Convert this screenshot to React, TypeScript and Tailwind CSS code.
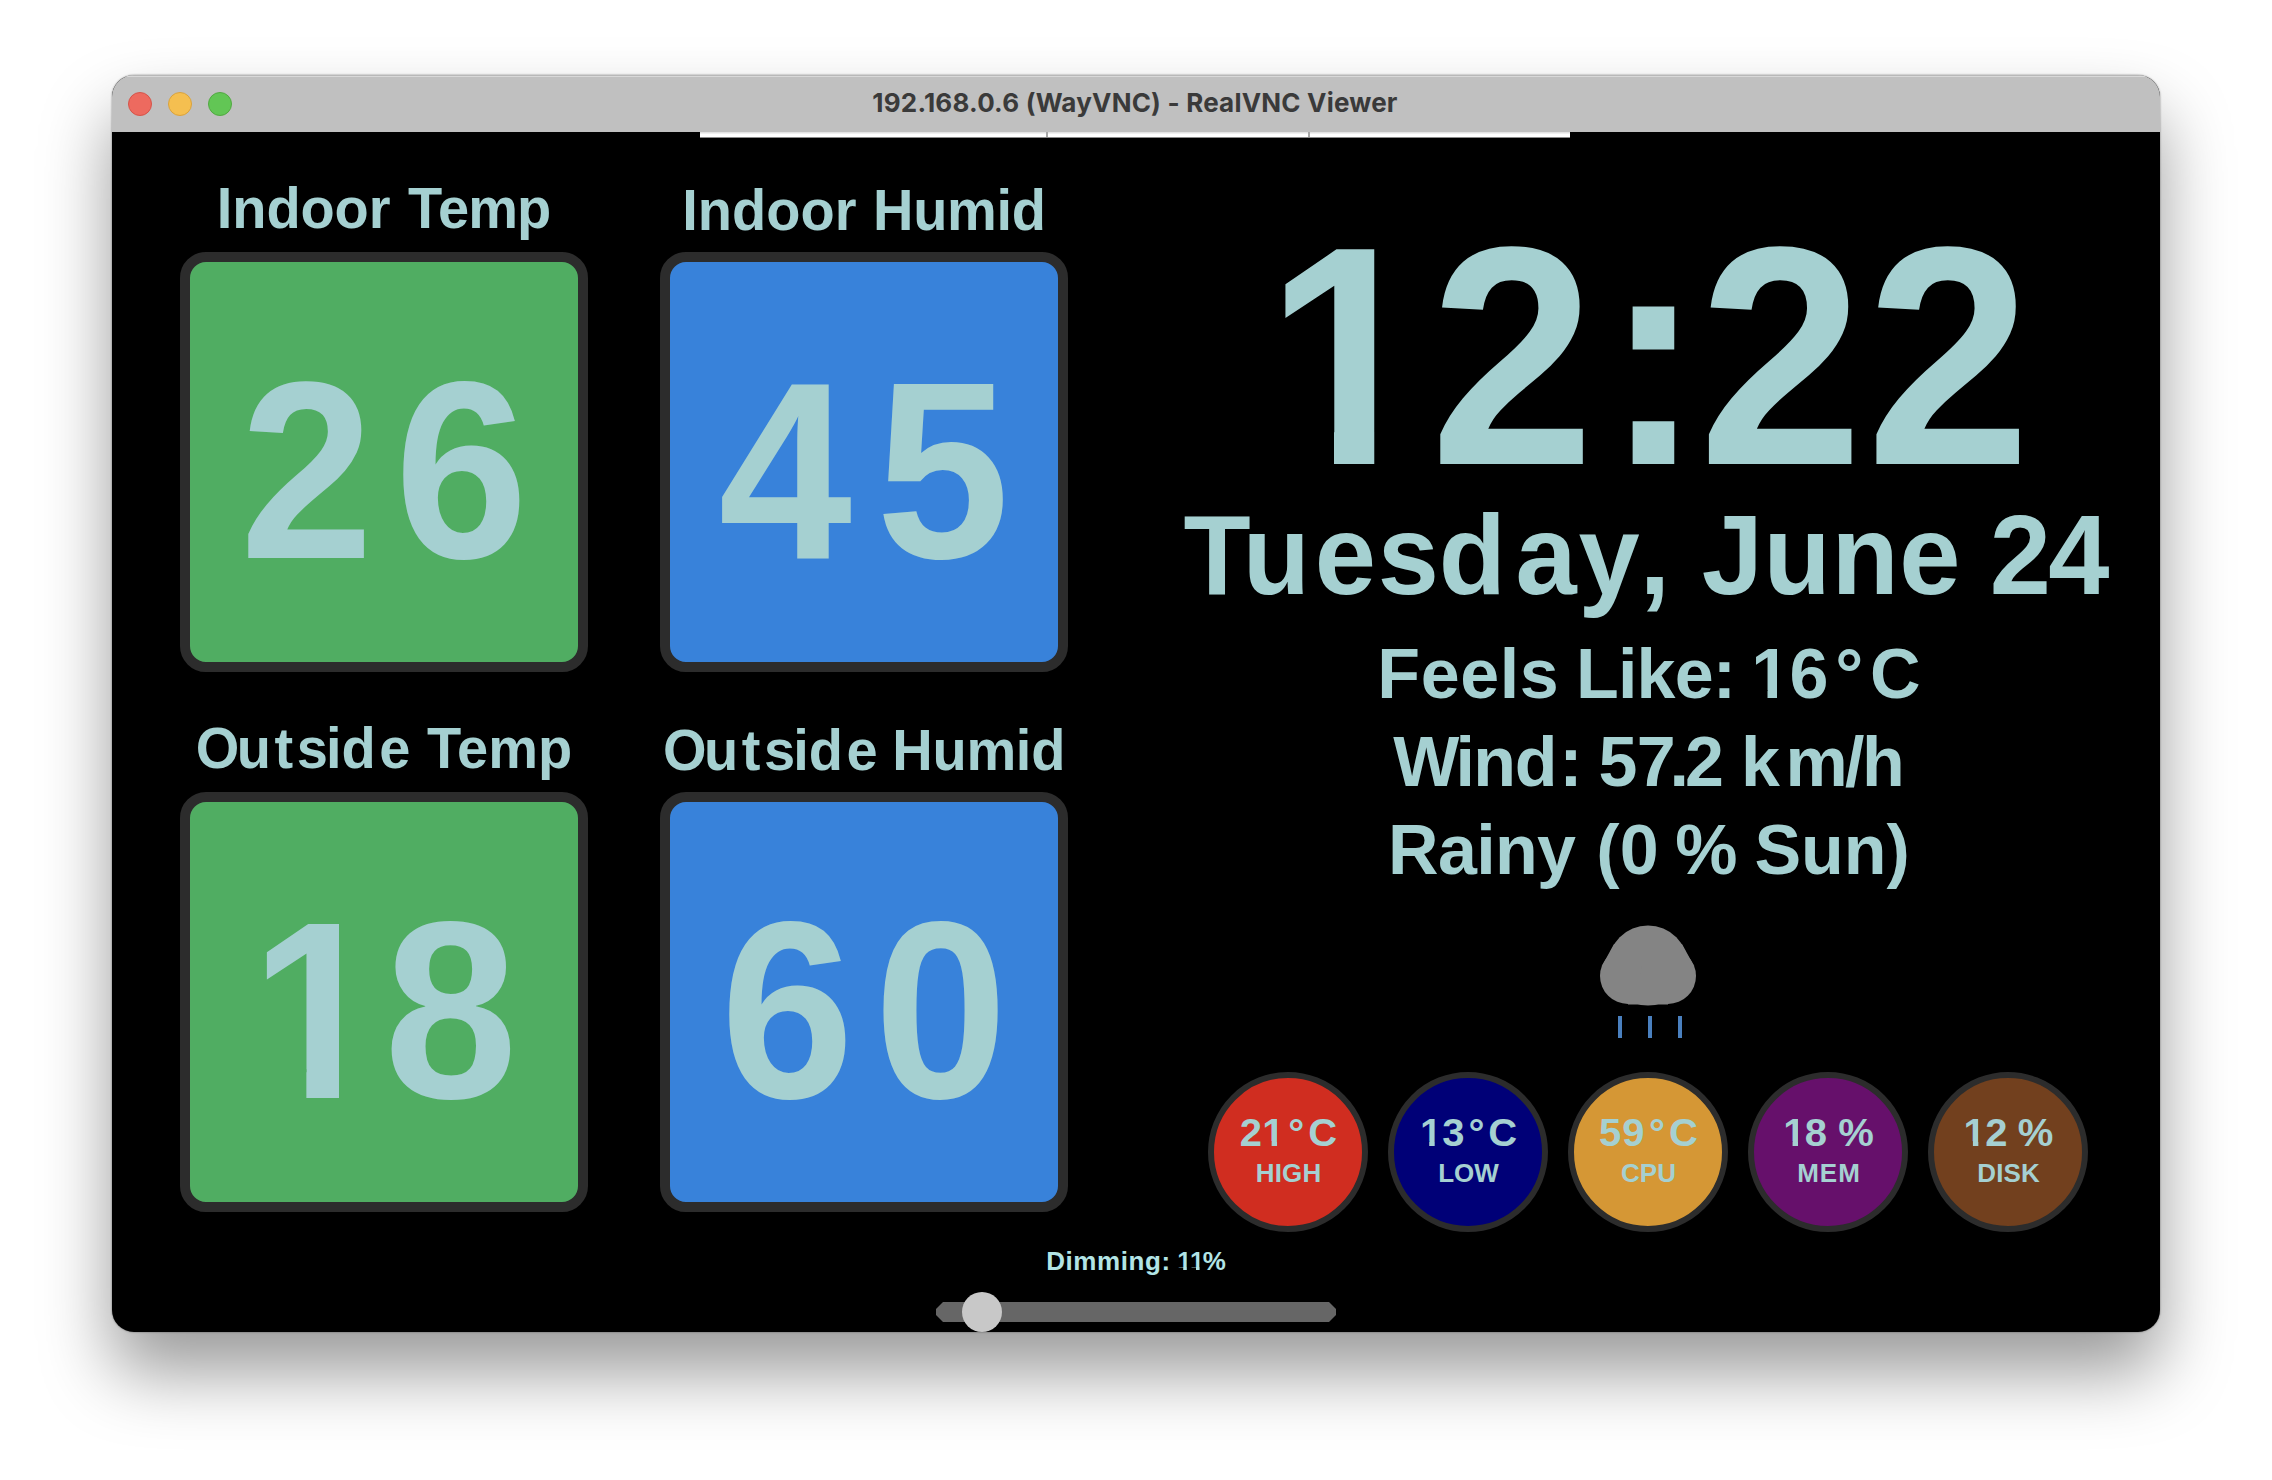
import React from "react";

/** A piece of text followed by the tracking (px) applied to each of its characters. */
type Run = [text: string, tracking?: number];

/** Numeral one drawn as a plain flagged stem: the foot of the glyph is clipped away. */
const One = () => (
  <span className="inline-block [clip-path:polygon(0_-50%,0.3685em_-50%,0.3685em_150%,0.2325em_150%,0.2325em_calc(50%+0.232em),0_calc(50%+0.232em))]">
    1
  </span>
);

function Line({ runs, className = "" }: { runs: Run[]; className?: string }) {
  return (
    <div
      className={`origin-[50%_calc(50%+0.3465em)] whitespace-pre text-center font-bold text-[#a5d0d1] [font-kerning:none] ${className}`}
    >
      {runs.map(([text, tracking = 0], i) => (
        <span key={i} style={{ letterSpacing: `${tracking}px` }}>
          {text.split(/(1)/).map((part, j) => (part === "1" ? <One key={j} /> : part))}
        </span>
      ))}
    </div>
  );
}

const OUTSIDE: Run[] = [["O", -2.6], ["u", 3.6], ["t", 3.6], ["s", -2], ["i", 0], ["d", 3.5], ["e", 0]];

function Gauge({ label, value, labelClass, fill }: { label: Run[]; value: Run[]; labelClass: string; fill: string }) {
  return (
    <section className="w-[408px]">
      <Line runs={label} className={`text-[56px] leading-[63px] scale-y-[1.02] ${labelClass}`} />
      <div className={`h-[420px] rounded-[26px] border-[10px] border-[#2c2c2c] pt-[79px] ${fill}`}>
        <Line runs={value} className="text-[240px] leading-[268px] scale-y-[1.054]" />
      </div>
    </section>
  );
}

function Dial({ value, label, fill }: { value: Run[]; label: Run[]; fill: string }) {
  return (
    <div className={`size-40 rounded-full border-[6px] border-[#2c2c2c] pt-8 pl-px ${fill}`}>
      <Line runs={value} className="text-[40px] leading-[44px] scale-y-[0.98]" />
      <Line runs={label} className="mt-1.5 text-[26px] leading-[27px] scale-y-[0.98]" />
    </div>
  );
}

const RainCloud = () => (
  <svg viewBox="0 0 96 116" className="mx-auto mt-[30px] h-[116px] w-24">
    <g fill="#848484">
      <circle cx="48" cy="41.5" r="40" />
      <circle cx="28" cy="52" r="28" />
      <circle cx="68" cy="52" r="28" />
      <path d="M14 20L2.5 41H93.5L82 20ZM28 52H68V80.5H28Z" />
    </g>
    <g fill="#4a80bf">
      <rect x="18" y="92" width="4" height="22" />
      <rect x="48" y="92" width="4" height="22" />
      <rect x="78" y="92" width="4" height="22" />
    </g>
  </svg>
);

function TitleBar() {
  return (
    <header className="relative flex h-[57px] items-center bg-[#c0c0c0] pl-4 shadow-[inset_0_1px_0_#b8b8b8,inset_0_2px_0_#d8d8d8]">
      <div className="flex gap-4">
        <span className="size-6 rounded-full border border-[#d5544a] bg-[#ed6a5f]" />
        <span className="size-6 rounded-full border border-[#d9a23d] bg-[#f5bf50]" />
        <span className="size-6 rounded-full border border-[#52a842] bg-[#62c655]" />
      </div>
      <h1 className="absolute inset-x-0 top-3 pr-0.5 text-center font-['Inter',sans-serif] text-[26px] leading-8 font-bold tracking-[0.2px] text-[#3a3a3a]">
        192.168.0.6 (WayVNC) - RealVNC Viewer
      </h1>
    </header>
  );
}

export default function App() {
  return (
    <div className="h-[1480px] w-[2272px] overflow-hidden bg-white pt-[75px]">
      <main className="mx-auto h-[1257px] w-[2048px] overflow-hidden rounded-[22px] bg-black font-['Liberation_Sans',Arial,sans-serif] shadow-[0_40px_70px_rgba(0,0,0,0.4),0_0_2px_rgba(0,0,0,0.5)]">
        <TitleBar />
        <div className="relative h-[1200px]">
          <div className="absolute top-0 left-[588px] flex h-1.5 w-[870px] border-b border-[#8a8a8a] bg-linear-to-b from-[#dcdcdc] to-white to-50%">
            <span className="w-[348px] border-r-2 border-[#a8a8a8]" />
            <span className="w-[262px] border-r-2 border-[#a8a8a8]" />
          </div>

          <div className="flex h-[1116px] pl-[68px]">
            <div className="grid grid-cols-[408px_408px] content-start gap-x-[72px] gap-y-[45px] pt-[45px]">
              <Gauge
                label={[["Indoor", -0.1], [" ", 2], ["T", -4.2], ["em", -1], ["p"]]}
                labelClass="mb-3"
                value={[["2", 21.2], ["6"]]}
                fill="bg-[#50ad62]"
              />
              <Gauge
                label={[["Indoor"], [" ", 1], ["Humid", -0.3]]}
                labelClass="pt-0.5 mb-2.5"
                value={[["4", 24], ["5"]]}
                fill="bg-[#3882da]"
              />
              <Gauge
                label={[...OUTSIDE, [" ", 1], ["T", -4.2], ["emp"]]}
                labelClass="mb-3"
                value={[["1", -0.1], ["8"]]}
                fill="bg-[#50ad62]"
              />
              <Gauge
                label={[...OUTSIDE, [" ", -0.8], ["Humid", -0.3]]}
                labelClass="pt-0.5 mb-2.5"
                value={[["6", 20], ["0"]]}
                fill="bg-[#3882da]"
              />
            </div>

            <div className="ml-[140px] w-[880px] pt-[104px]">
              <Line
                runs={[["1", 0.2], ["2", 9.5], [":", -4.1], ["2", 2.9], ["2"]]}
                className="text-[296px] leading-[251px] scale-y-[1.054]"
              />
              <Line
                runs={[
                  ["T", -7.9], ["u", 4.7], ["e", 2], ["s", -0.2], ["d", 9.5], ["a", 1.8], ["y", -0.1], [",", 0],
                  [" ", 1.1], ["Jun", 0.6], ["e", 0], [" ", -1.3], ["2", -2.5], ["4"],
                ]}
                className="mx-[-40px] mt-[7px] pr-[3px] text-[110px] leading-[123px] scale-y-[1.035]"
              />
              <div className="mt-[13px] pl-0.5">
                <Line
                  runs={[
                    ["Feel", 0.6], ["s", 0], [" ", -2.2], ["Like", -0.8], [":", 0], [" ", -4.4],
                    ["1", -0.7], ["6", 6.9], ["°", 6.8], ["C"],
                  ]}
                  className="text-[70px] leading-[88px] scale-y-[1.015]"
                />
                <Line
                  runs={[
                    ["W", -3.8], ["i", -1.7], ["n", -1.4], ["d", 1.8], [":", 0], [" ", -3.5], ["5", -0.8], ["7", -6],
                    [".", -4], ["2", 0], [" ", -2.3], ["k", 5.4], ["m", -2.6], ["/", -2.6], ["h"],
                  ]}
                  className="text-[70px] leading-[88px] scale-y-[1.015]"
                />
                <Line
                  runs={[["Rain", -0.7], ["y", 0], [" ", 1], ["(0", 0], [" ", -2.8], ["%", 0], [" ", -2.6], ["Sun)"]]}
                  className="text-[70px] leading-[88px] scale-y-[1.015]"
                />
              </div>
              <RainCloud />
              <div className="mt-8 flex gap-5">
                <Dial value={[["2", 0.2], ["1", 3.7], ["°", 4], ["C"]]} label={[["HIG", 0.2], ["H"]]} fill="bg-[#d02d20]" />
                <Dial value={[["1", 0], ["3", 4.1], ["°", 3.6], ["C"]]} label={[["LOW"]]} fill="bg-[#000077]" />
                <Dial value={[["5", 1.1], ["9", 4.5], ["°", 4], ["C"]]} label={[["CPU"]]} fill="bg-[#d59735]" />
                <Dial value={[["1", -0.7], ["8", 0], [" ", 0], ["%"]]} label={[["ME", 1], ["M"]]} fill="bg-[#66106b]" />
                <Dial value={[["1", -0.7], ["2", 0], [" ", -0.7], ["%"]]} label={[["DIS", 0.1], ["K"]]} fill="bg-[#72401e]" />
              </div>
            </div>
          </div>

          <Line
            runs={[["Dimming", 0.6], [":", 0], [" ", -0.3], ["11", -1.7], ["%"]]}
            className="text-[26px] leading-[27px] text-[#b2e4e5] scale-y-[0.98]"
          />
          <div className="relative mx-auto mt-[27px] h-5 w-[400px]">
            <div className="h-full bg-[#666666] [clip-path:polygon(7px_0,393px_0,100%_7px,100%_13px,393px_100%,7px_100%,0_13px,0_7px)]" />
            <span className="absolute -top-2.5 left-[26px] size-10 rounded-full bg-[#c8c8c8]" />
          </div>
        </div>
      </main>
    </div>
  );
}
